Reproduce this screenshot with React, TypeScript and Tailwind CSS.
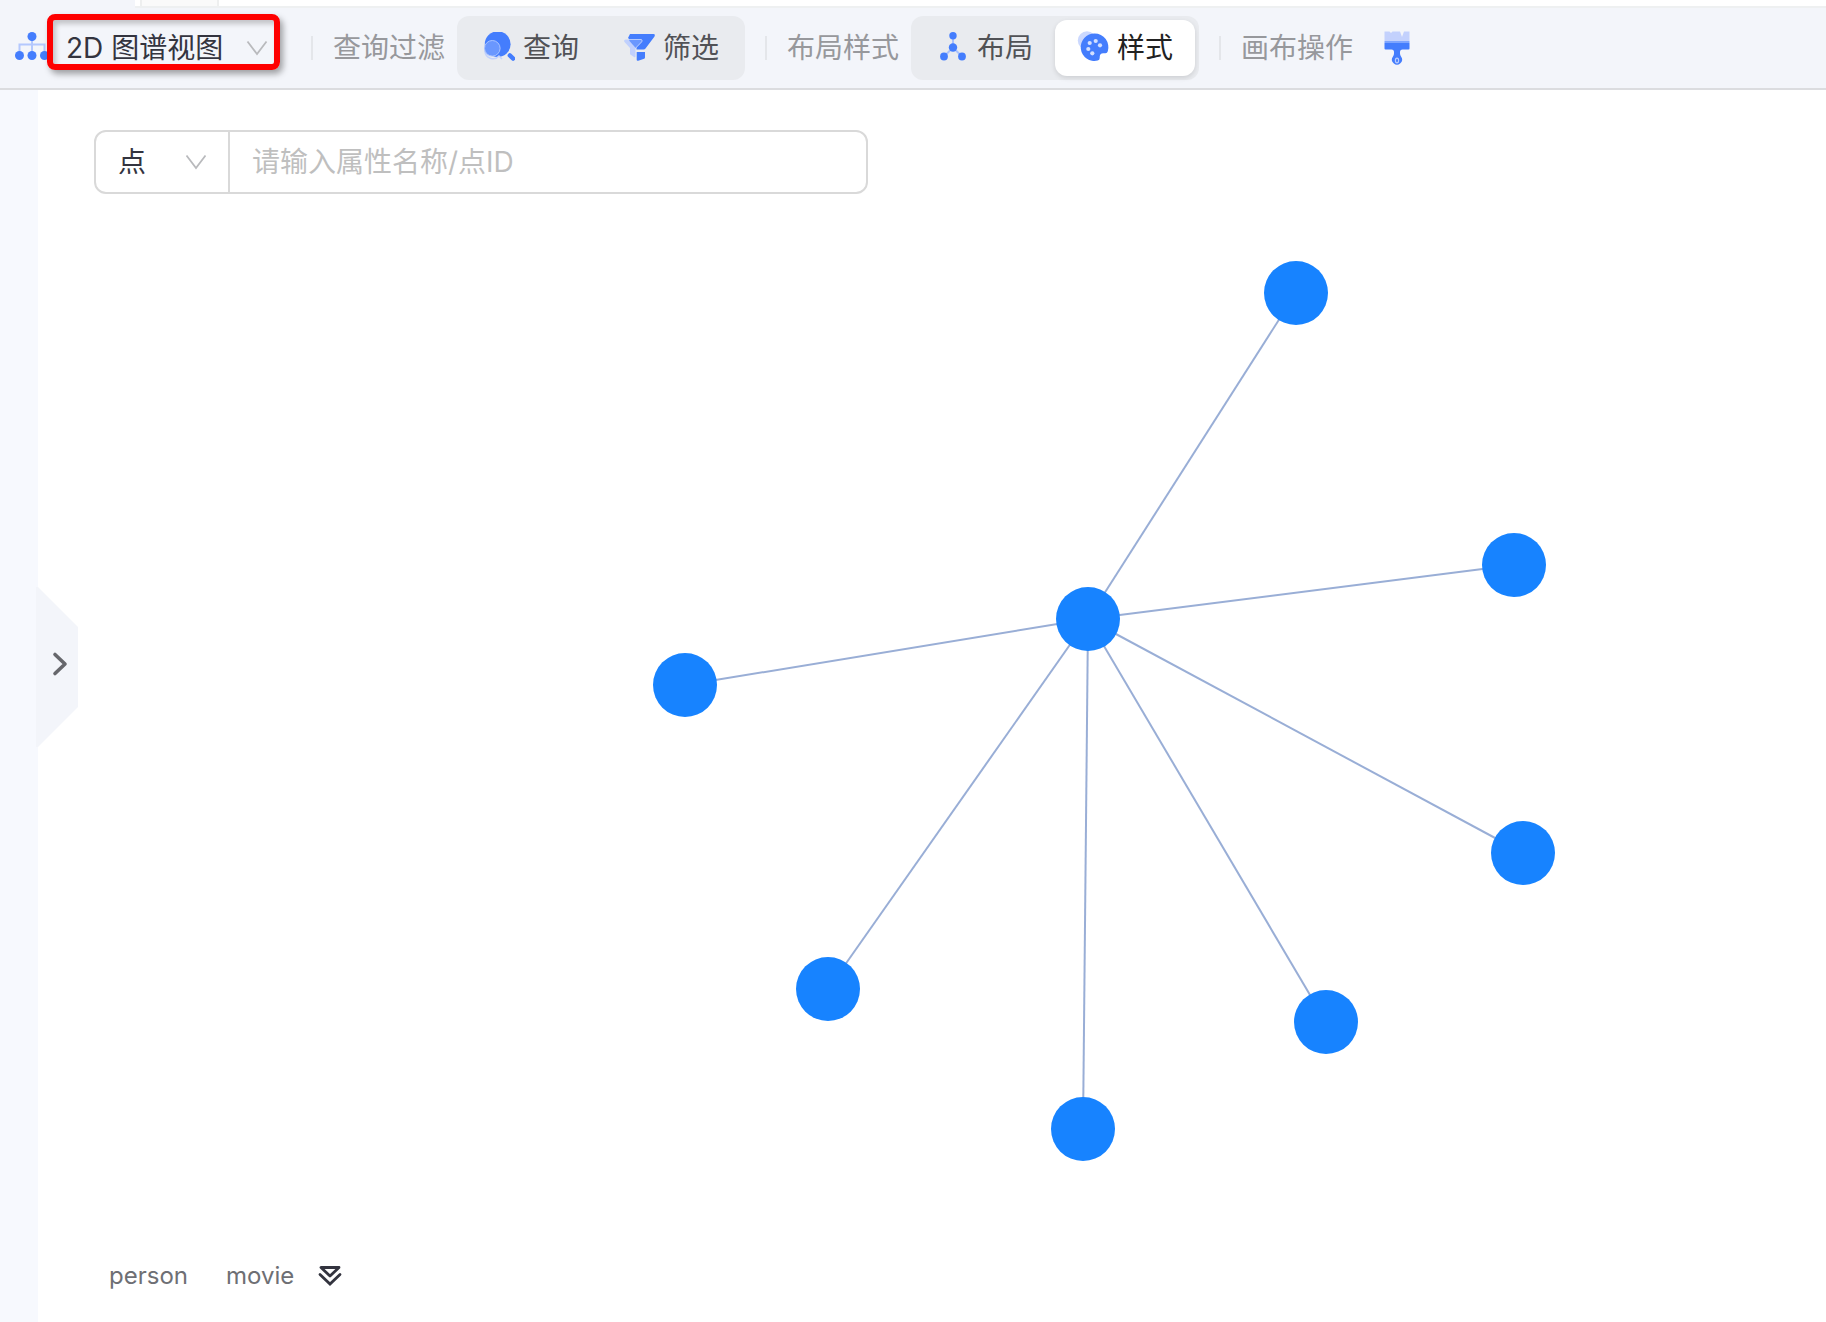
import React, { useState } from "react";

type IconProps = { className?: string };

const BLUE = "#447dfd";

function TreeIcon() {
  return (
    <svg width="36" height="32" viewBox="0 0 36 32" className="shrink-0" aria-hidden="true">
      <path d="M5.5 23V12.500h25v10.500M18 4v20" fill="none" stroke="#b4c8fd" strokeWidth="2" />
      <g fill={BLUE}>
        <circle cx="18" cy="4.5" r="4.5" />
        <circle cx="5.5" cy="23.5" r="4.5" />
        <circle cx="18" cy="23.5" r="4.5" />
        <circle cx="30.5" cy="23.5" r="4.5" />
      </g>
    </svg>
  );
}

function SearchIcon() {
  return (
    <svg width="32" height="32" viewBox="0 0 32 32" aria-hidden="true">
      <circle cx="14.7" cy="12.2" r="12.9" fill={BLUE} />
      <path d="M2 19a8 8 0 0 0 14 5l3 3" fill="none" stroke="#c3d2fc" strokeWidth="1.5" />
      <circle cx="9.3" cy="16.3" r="7.8" fill="#6a97fe" stroke="#a9c3ff" strokeWidth="1" />
      <path d="M26.8 23.4l3.4 3.2" stroke={BLUE} strokeWidth="4.4" strokeLinecap="round" />
    </svg>
  );
}

function FilterIcon() {
  return (
    <svg width="32" height="32" viewBox="0 0 32 32" aria-hidden="true">
      <path d="M7 2h23.5q2 0 1 2.500L22.500 16.500q-.6 1-2 1h-7V14L5 6z" fill={BLUE} />
      <path d="M13.700 20h8.300v5.500q0 .8-.8 1.200l-6 2q-1.500.4-1.500-1z" fill={BLUE} />
      <path d="M2.500 7.500h15.500q1.800.3.8 2.200L12.500 16v8.500q-.4 1.200-1.500.4l-4-2.600V16L1.300 9.800q-.8-1.800 1.200-2.300z" fill="#c0d0fd" />
      <path d="M6 7.500h12q1.800.3.8 2.200L12.700 16 6.500 9z" fill="#6a97fe" />
      <path d="M6 7.500h12q1.800.3.8 2.200L12.700 16" fill="none" stroke="#b5caff" strokeWidth="1" />
    </svg>
  );
}

function LayoutIcon() {
  return (
    <svg width="32" height="32" viewBox="0 0 32 32" aria-hidden="true">
      <path d="M16 3.500v12L7 24.500M16 15.500l9 9" fill="none" stroke="#a9c1fd" strokeWidth="2" />
      <g fill={BLUE}>
        <circle cx="16" cy="3.700" r="3.700" />
        <circle cx="16" cy="15.500" r="4.200" />
        <circle cx="7" cy="24.500" r="3.900" />
        <circle cx="25" cy="24.500" r="3.900" />
      </g>
    </svg>
  );
}

function PaletteIcon() {
  return (
    <svg width="32" height="32" viewBox="0 0 32 32" className="overflow-visible" aria-hidden="true">
      <circle cx="10" cy="8.500" r="9.200" fill="#cbd8fe" />
      <path
        d="M17.700 1.500a13.700 13.700 0 1 0 3 27q2-.5 2-2.500v-1q0-3.500 3.500-3.800h2.300q1.800-.2 2.300-2A13.700 13.700 0 0 0 17.700 1.500z"
        fill={BLUE}
      />
      <g fill="#d3dfff">
        <circle cx="12.700" cy="11" r="2.100" />
        <circle cx="18.700" cy="9" r="2.100" />
        <circle cx="23" cy="13.300" r="2.100" />
        <circle cx="11.300" cy="17" r="2.100" />
        <circle cx="15.300" cy="21.300" r="2.100" />
      </g>
    </svg>
  );
}

function BrushIcon() {
  return (
    <svg width="26" height="38" viewBox="0 -2 26 38" aria-hidden="true">
      <path d="M.5 10V.5h5L7 2l1.500-1.500H16L18 6l2-5.500h5.500V10z" fill="#c3d1fd" />
      <path d="M.5 10h25v2H.5z" fill="#7ea5fe" />
      <path
        d="M.5 12h25v5.500q0 1-1 1h-6q-2.500 0-2.500 2.500v1.500q0 1.500 1 3a5 5 0 1 1-8 0q1-1.500 1-3V21q0-2.500-2.500-2.500h-6q-1 0-1-1z"
        fill={BLUE}
      />
      <ellipse cx="13" cy="29.500" rx="1.600" ry="2.300" fill="none" stroke="#b9ccff" strokeWidth="1.200" />
    </svg>
  );
}

function DownIcon({ className }: IconProps) {
  return (
    <svg width="22" height="16" viewBox="0 0 22 16" className={className} aria-hidden="true">
      <path d="M1.500 1.500L11 14l9.500-12.500" fill="none" stroke="#b9babd" strokeWidth="1.800" />
    </svg>
  );
}

function ToolButton({
  active,
  onClick,
  icon,
  children,
}: {
  active: boolean;
  onClick: () => void;
  icon: React.ReactNode;
  children: React.ReactNode;
}) {
  return (
    <button
      type="button"
      onClick={onClick}
      className={
        active
          ? "flex h-14 items-center gap-2 whitespace-nowrap rounded-xl bg-white px-[22px] text-[#222] shadow-[0_2px_5px_rgba(0,0,0,0.12)]"
          : "flex h-14 items-center gap-2 whitespace-nowrap rounded-xl px-[22px] text-[#515256]"
      }
    >
      {icon}
      <span>{children}</span>
    </button>
  );
}

function Divider() {
  return <div className="mx-5 h-6 w-0.5 shrink-0 bg-[#e4e6ea]" />;
}

function Toolbar() {
  const [active, setActive] = useState("style");
  return (
    <header className="flex h-[82px] shrink-0 items-center border-b-2 border-[#dbdcdf] bg-[#f3f5fa] pl-3.5 text-[28px] leading-10 text-[#97989c]">
      <TreeIcon />
      <div className="relative -ml-[3px] mr-[11px] -mt-3 flex h-14 w-[233px] shrink-0 items-center rounded-lg border-[6px] border-[#fe0000] shadow-[3px_4px_6px_rgba(0,0,0,0.35),inset_3px_4px_5px_rgba(0,0,0,0.2)]">
        <select
          aria-label="视图"
          className="mt-3 h-10 w-full appearance-none bg-transparent pl-[13px] text-[#33343f] outline-none"
        >
          <option>2D 图谱视图</option>
          <option>3D 图谱视图</option>
        </select>
        <DownIcon className="pointer-events-none absolute right-1.5 top-5" />
      </div>
      <Divider />
      <span className="whitespace-nowrap">查询过滤</span>
      <div className="ml-3 flex shrink-0 rounded-xl bg-[#e9ebef] p-1">
        <ToolButton active={active === "query"} onClick={() => setActive("query")} icon={<SearchIcon />}>
          查询
        </ToolButton>
        <ToolButton active={active === "filter"} onClick={() => setActive("filter")} icon={<FilterIcon />}>
          筛选
        </ToolButton>
      </div>
      <Divider />
      <span className="whitespace-nowrap">布局样式</span>
      <div className="ml-3 flex shrink-0 rounded-xl bg-[#e9ebef] p-1">
        <ToolButton active={active === "layout"} onClick={() => setActive("layout")} icon={<LayoutIcon />}>
          布局
        </ToolButton>
        <ToolButton active={active === "style"} onClick={() => setActive("style")} icon={<PaletteIcon />}>
          样式
        </ToolButton>
      </div>
      <Divider />
      <span className="whitespace-nowrap">画布操作</span>
      <button type="button" aria-label="清空画布" className="ml-[31px]">
        <BrushIcon />
      </button>
    </header>
  );
}

const center = { x: 1050, y: 529 };
const leaves = [
  { x: 1258, y: 203 },
  { x: 1476, y: 475 },
  { x: 1485, y: 763 },
  { x: 1288, y: 932 },
  { x: 1045, y: 1039 },
  { x: 790, y: 899 },
  { x: 647, y: 595 },
];

function Graph() {
  return (
    <svg className="absolute inset-0 h-full w-full" role="img" aria-label="图谱">
      <g stroke="#99aed6" strokeWidth="2">
        {leaves.map((n) => (
          <line key={`${n.x}-${n.y}`} x1={center.x} y1={center.y} x2={n.x} y2={n.y} />
        ))}
      </g>
      <g fill="#1783ff">
        {[center, ...leaves].map((n) => (
          <circle key={`${n.x}-${n.y}`} cx={n.x} cy={n.y} r="32" />
        ))}
      </g>
    </svg>
  );
}

export default function App() {
  return (
    <div className="flex min-h-screen flex-col bg-white font-['Inter','Noto_Sans_CJK_SC',sans-serif]">
      <div className="flex h-1.5 shrink-0">
        <div className="w-[135px] bg-[#f3f5fa]" />
        <div className="ml-[5px] w-[79px] border-x-2 border-[#eeefef] bg-[#fafafa]" />
      </div>
      <div className="flex h-0.5 shrink-0 bg-[#eef0f1]">
        <div className="w-[135px] bg-[#f3f5fa]" />
      </div>
      <Toolbar />
      <div className="flex flex-1">
        <aside className="w-[38px] shrink-0 bg-[#f7f9fe]" />
        <main className="relative flex flex-1 flex-col">
          <Graph />
          <button type="button" aria-label="展开" className="absolute -left-0.5 top-[497px]">
            <svg width="42" height="160" viewBox="0 0 42 160" aria-hidden="true">
              <path d="M0 0h2l40 40v80L2 160H0z" fill="#f3f5fa" />
              <path d="M19 67.500l10 9.500-10 9.500" fill="none" stroke="#66676c" strokeWidth="3.600" strokeLinecap="round" strokeLinejoin="round" />
            </svg>
          </button>
          <div className="relative ml-14 mt-10 flex h-16 w-[774px] max-w-full overflow-hidden rounded-xl border-2 border-[#d9d9d9] bg-white text-[28px] leading-10">
            <div className="relative w-[134px] shrink-0 border-r-2 border-[#d9d9d9]">
              <select
                aria-label="类型"
                className="h-full w-full appearance-none bg-transparent pl-[22px] text-[#33343f] outline-none"
              >
                <option>点</option>
                <option>边</option>
              </select>
              <DownIcon className="pointer-events-none absolute right-[21px] top-[22px]" />
            </div>
            <input
              type="text"
              aria-label="属性名称或点ID"
              placeholder="请输入属性名称/点ID"
              className="min-w-0 flex-1 px-[22px] outline-none placeholder:text-[#bfbfbf]"
            />
          </div>
          <div className="relative mb-[30px] ml-[71px] mt-auto flex items-center text-2xl leading-8 text-[#6e6f74]">
            <span>person</span>
            <span className="ml-[38px]">movie</span>
            <button type="button" aria-label="展开图例" className="ml-6">
              <svg width="24" height="22" viewBox="0 0 24 22" aria-hidden="true">
                <path d="M3 2.500h18L12 11z" fill="none" stroke="#33343f" strokeWidth="2.800" strokeLinejoin="round" />
                <path d="M2 9.500l10 9.500 10-9.500" fill="none" stroke="#33343f" strokeWidth="2.800" strokeLinecap="round" />
              </svg>
            </button>
          </div>
        </main>
      </div>
    </div>
  );
}
